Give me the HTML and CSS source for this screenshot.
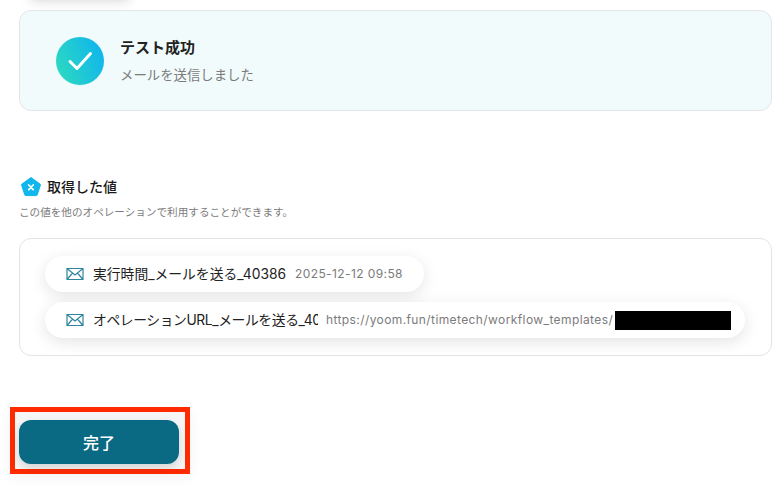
FILE: index.html
```html
<!DOCTYPE html>
<html lang="ja">
<head>
<meta charset="utf-8">
<title>テスト成功</title>
<link rel="stylesheet" href="styles.css">
</head>
<body>
<main class="page">
  <div class="prev-button"></div>
  <section class="result-card">
    <svg class="check-icon" width="48" height="48" viewBox="0 0 48 48">
      <defs>
        <linearGradient id="g" x1="0" y1="0.75" x2="1" y2="0.35">
          <stop offset="0" stop-color="#2dd9c0"/>
          <stop offset="1" stop-color="#10b6ec"/>
        </linearGradient>
      </defs>
      <circle cx="24" cy="24" r="24" fill="url(#g)"/>
      <path d="M14 24.5 L21 31.5 L34.5 16.5" fill="none" stroke="#fff" stroke-width="3" stroke-linecap="round" stroke-linejoin="round"/>
    </svg>
    <div class="result-text">
      <div class="result-title">テスト成功</div>
      <div class="result-sub">メールを送信しました</div>
    </div>
  </section>

  <section class="values">
    <h2 class="values-head">
      <svg width="22" height="22" viewBox="0 0 22 22">
        <path d="M11 1.5 L20 8 Q20.6 8.5 20.4 9.2 L17.2 18.9 Q17 19.6 16.2 19.6 L5.8 19.6 Q5 19.6 4.8 18.9 L1.6 9.2 Q1.4 8.5 2 8 L11 1.5 Z" fill="#10b6ec" stroke="#10b6ec" stroke-linejoin="round"/>
        <path d="M8.8 9 L13.2 13.6 M13.2 9 L8.8 13.6" stroke="#fff" stroke-width="1.8" stroke-linecap="round"/>
      </svg>
      取得した値
    </h2>
    <p class="values-note">この値を他のオペレーションで利用することができます。</p>
    <div class="values-box">
      <div class="chip">
        <svg class="mail" width="18" height="14" viewBox="0 0 18 14"><path d="M1 1.5 H17 V12.5 H1 Z M1 1.5 L9 8 L17 1.5 M1 12.5 L6.6 6 M17 12.5 L11.4 6" fill="none" stroke="#2f84a0" stroke-width="1.2"/></svg>
        <span class="chip-name">実行時間_メールを送る_40386</span>
        <span class="chip-value">2025-12-12 09:58</span>
      </div>
      <div class="chip">
        <svg class="mail" width="18" height="14" viewBox="0 0 18 14"><path d="M1 1.5 H17 V12.5 H1 Z M1 1.5 L9 8 L17 1.5 M1 12.5 L6.6 6 M17 12.5 L11.4 6" fill="none" stroke="#2f84a0" stroke-width="1.2"/></svg>
        <span class="chip-name clipped">オペレーションURL_メールを送る_40386</span>
        <span class="chip-value">https://yoom.fun/timetech/workflow_templates/</span>
        <span class="redact"></span>
      </div>
    </div>
  </section>

  <div class="highlight">
    <button class="done" type="button">完了</button>
  </div>
</main>
</body>
</html>
```
FILE: styles.css
```css
* { box-sizing: border-box; }
html, body { margin: 0; padding: 0; background: #fff; }
body {
  width: 780px;
  height: 486px;
  overflow: hidden;
  font-family: "Inter", "Noto Sans CJK JP", sans-serif;
  color: #222;
}
.page {
  display: flex;
  flex-direction: column;
  align-items: flex-start;
  padding: 10px 8px 0 19px;
  position: relative;
}
.prev-button {
  position: absolute;
  left: 27px;
  top: -30px;
  width: 106px;
  height: 28px;
  border-radius: 12px;
  box-shadow: 0 3px 12px rgba(0, 0, 0, .16);
}
.result-card {
  width: 753px;
  height: 101px;
  display: flex;
  align-items: center;
  gap: 16px;
  padding: 0 36px;
  background: #f2fbfb;
  border: 1px solid #e2e6e8;
  border-radius: 12px;
}
.check-icon { flex: none; }
.result-text { display: flex; flex-direction: column; gap: 7px; margin-top: 2px; }
.result-title { font-size: 15px; line-height: 20px; font-weight: 700; color: #222; }
.result-sub { font-size: 13.4px; line-height: 20px; color: #7b7b7b; }
.values { margin-top: 65px; width: 753px; }
.values-head {
  display: flex;
  align-items: center;
  gap: 5px;
  margin: 0 0 0 1px;
  font-size: 14px;
  line-height: 22px;
  font-weight: 500;
  color: #1a1a1a;
}
.values-note {
  margin: 7px 0 0;
  font-size: 10.6px;
  line-height: 16px;
  color: #7b7b7b;
}
.values-box {
  margin-top: 17px;
  height: 118px;
  border: 1px solid #e2e4e6;
  border-radius: 12px;
  padding: 17px 25px 0;
  display: flex;
  flex-direction: column;
  align-items: flex-start;
  gap: 10px;
}
.chip {
  height: 36px;
  display: flex;
  align-items: center;
  padding: 0 14px 0 21px;
  background: #fff;
  border-radius: 18px;
  box-shadow: 0 4px 16px rgba(0, 0, 0, .11);
  white-space: nowrap;
}
.chip:first-child { padding-right: 21px; }
.mail { flex: none; margin-right: 9px; }
.chip-name { font-size: 13.8px; line-height: 20px; margin-top: -1px; color: #222; }
.chip-name.clipped { width: 225px; overflow: hidden; flex: none; letter-spacing: -.4px; }
.chip-value {
  margin-left: 9px;
  font-size: 12px;
  line-height: 20px;
  margin-top: -1px;
  letter-spacing: .4px;
  color: #7b7b7b;
}
.chip-name.clipped + .chip-value { margin-left: 8px; }
.redact { width: 116px; height: 19px; margin-left: 2px; background: #000; flex: none; }
.highlight {
  margin-top: 51px;
  margin-left: -9px;
  width: 180px;
  height: 67px;
  border: 5px solid #ff2a00;
  padding: 8px 4px 0;
  background: #f6f6f6;
  box-shadow: 0 4px 14px rgba(0, 0, 0, .05);
}
.done {
  display: block;
  width: 160px;
  height: 44px;
  border: 0;
  border-radius: 12px;
  background: #0b6a83;
  color: #fff;
  font: 500 16px/44px "Inter", "Noto Sans CJK JP", sans-serif;
  box-shadow: 0 4px 10px rgba(0, 0, 0, .14);
}
```
